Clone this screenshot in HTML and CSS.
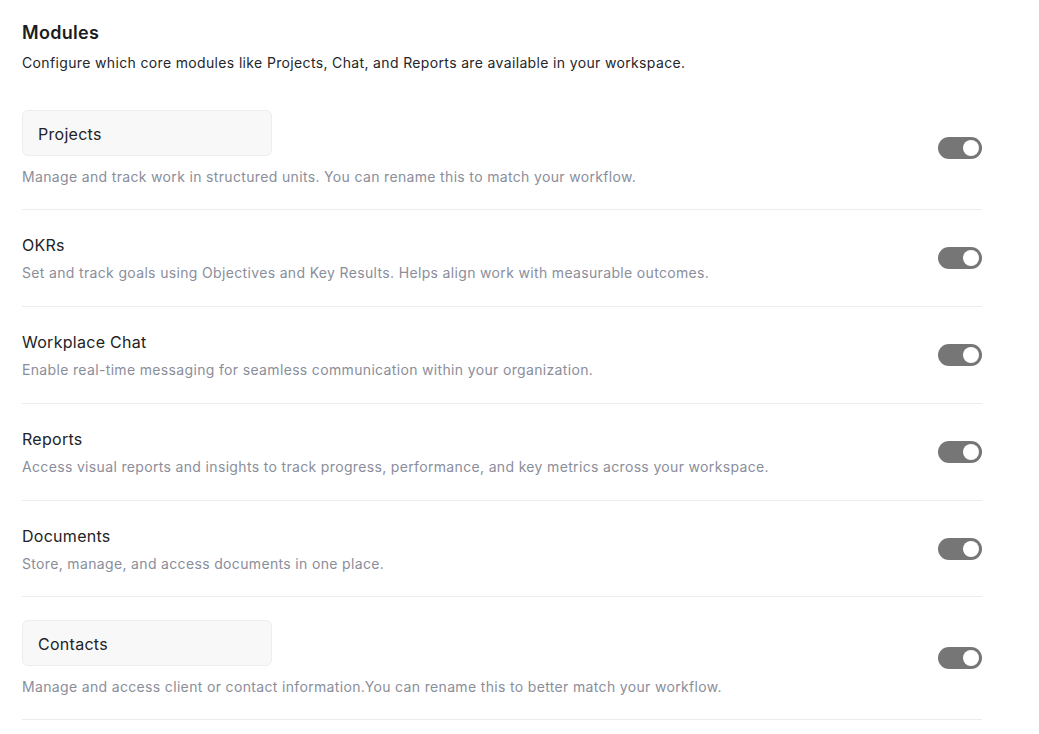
FILE: index.html
```html
<!DOCTYPE html>
<html lang="en">
<head>
<meta charset="utf-8">
<title>Modules</title>
<link rel="stylesheet" href="styles.css">
</head>
<body>
<main class="page">
  <header class="header">
    <h1 class="title">Modules</h1>
    <p class="subtitle">Configure which core modules like Projects, Chat, and Reports are available in your workspace.</p>
  </header>
  <ul class="modules">
    <li class="module module--editable">
      <div class="module-body">
        <div class="name-input">Projects</div>
        <p class="desc">Manage and track work in structured units. You can rename this to match your workflow.</p>
      </div>
      <span class="toggle"><span class="knob"></span></span>
    </li>
    <li class="module">
      <div class="module-body">
        <h2 class="name">OKRs</h2>
        <p class="desc">Set and track goals using Objectives and Key Results. Helps align work with measurable outcomes.</p>
      </div>
      <span class="toggle"><span class="knob"></span></span>
    </li>
    <li class="module">
      <div class="module-body">
        <h2 class="name">Workplace Chat</h2>
        <p class="desc">Enable real-time messaging for seamless communication within your organization.</p>
      </div>
      <span class="toggle"><span class="knob"></span></span>
    </li>
    <li class="module">
      <div class="module-body">
        <h2 class="name">Reports</h2>
        <p class="desc">Access visual reports and insights to track progress, performance, and key metrics across your workspace.</p>
      </div>
      <span class="toggle"><span class="knob"></span></span>
    </li>
    <li class="module module--last-plain">
      <div class="module-body">
        <h2 class="name">Documents</h2>
        <p class="desc">Store, manage, and access documents in one place.</p>
      </div>
      <span class="toggle"><span class="knob"></span></span>
    </li>
    <li class="module module--editable">
      <div class="module-body">
        <div class="name-input">Contacts</div>
        <p class="desc">Manage and access client or contact information.You can rename this to better match your workflow.</p>
      </div>
      <span class="toggle"><span class="knob"></span></span>
    </li>
  </ul>
</main>
</body>
</html>
```
FILE: styles.css
```css
* { box-sizing: border-box; }
html, body { margin: 0; padding: 0; background: #ffffff; }
body {
  font-family: Inter, "Noto Sans", "Liberation Sans", sans-serif;
  color: #1f2024;
}
.page {
  width: 960px;
  margin-left: 22px;
  padding-top: 19px;
}
.header { margin-bottom: 37px; }
.title {
  margin: 0;
  font-size: 18px;
  line-height: 28px;
  font-weight: 600;
  letter-spacing: 0.3px;
  color: #1c1d21;
}
.subtitle {
  margin: 6px 0 0;
  font-size: 14px;
  line-height: 20px;
  letter-spacing: 0.35px;
  color: #25262b;
}
.modules { list-style: none; margin: 0; padding: 0; }
.module {
  display: flex;
  align-items: center;
  justify-content: space-between;
  padding: 24px 0 23px;
  border-bottom: 1px solid #ececec;
}
.module--editable { padding: 23px 0 22px; }
.module--last-plain { padding-bottom: 22px; }
.modules > .module:first-child { padding-top: 0; }
.module-body { display: flex; flex-direction: column; }
.name {
  margin: 0;
  font-size: 16px;
  line-height: 22px;
  font-weight: 400;
  letter-spacing: 0.28px;
  color: #222326;
}
.name-input {
  width: 250px;
  height: 46px;
  display: flex;
  align-items: center;
  padding: 1px 15px 0;
  background: #f8f8f8;
  border: 1px solid #ededed;
  border-radius: 6px;
  font-size: 16px;
  letter-spacing: 0.28px;
  color: #222326;
}
.desc {
  margin: 7px 0 0;
  font-size: 14px;
  line-height: 20px;
  letter-spacing: 0.34px;
  color: #8a8e9b;
}
.module--editable .desc { margin-top: 11px; }
.toggle {
  flex: none;
  width: 44px;
  height: 22px;
  margin-bottom: 2px;
  border-radius: 11px;
  background: #767676;
  display: flex;
  align-items: center;
  justify-content: flex-end;
  padding-right: 3px;
}
.knob {
  width: 16px;
  height: 16px;
  border-radius: 50%;
  background: #ffffff;
}
```
